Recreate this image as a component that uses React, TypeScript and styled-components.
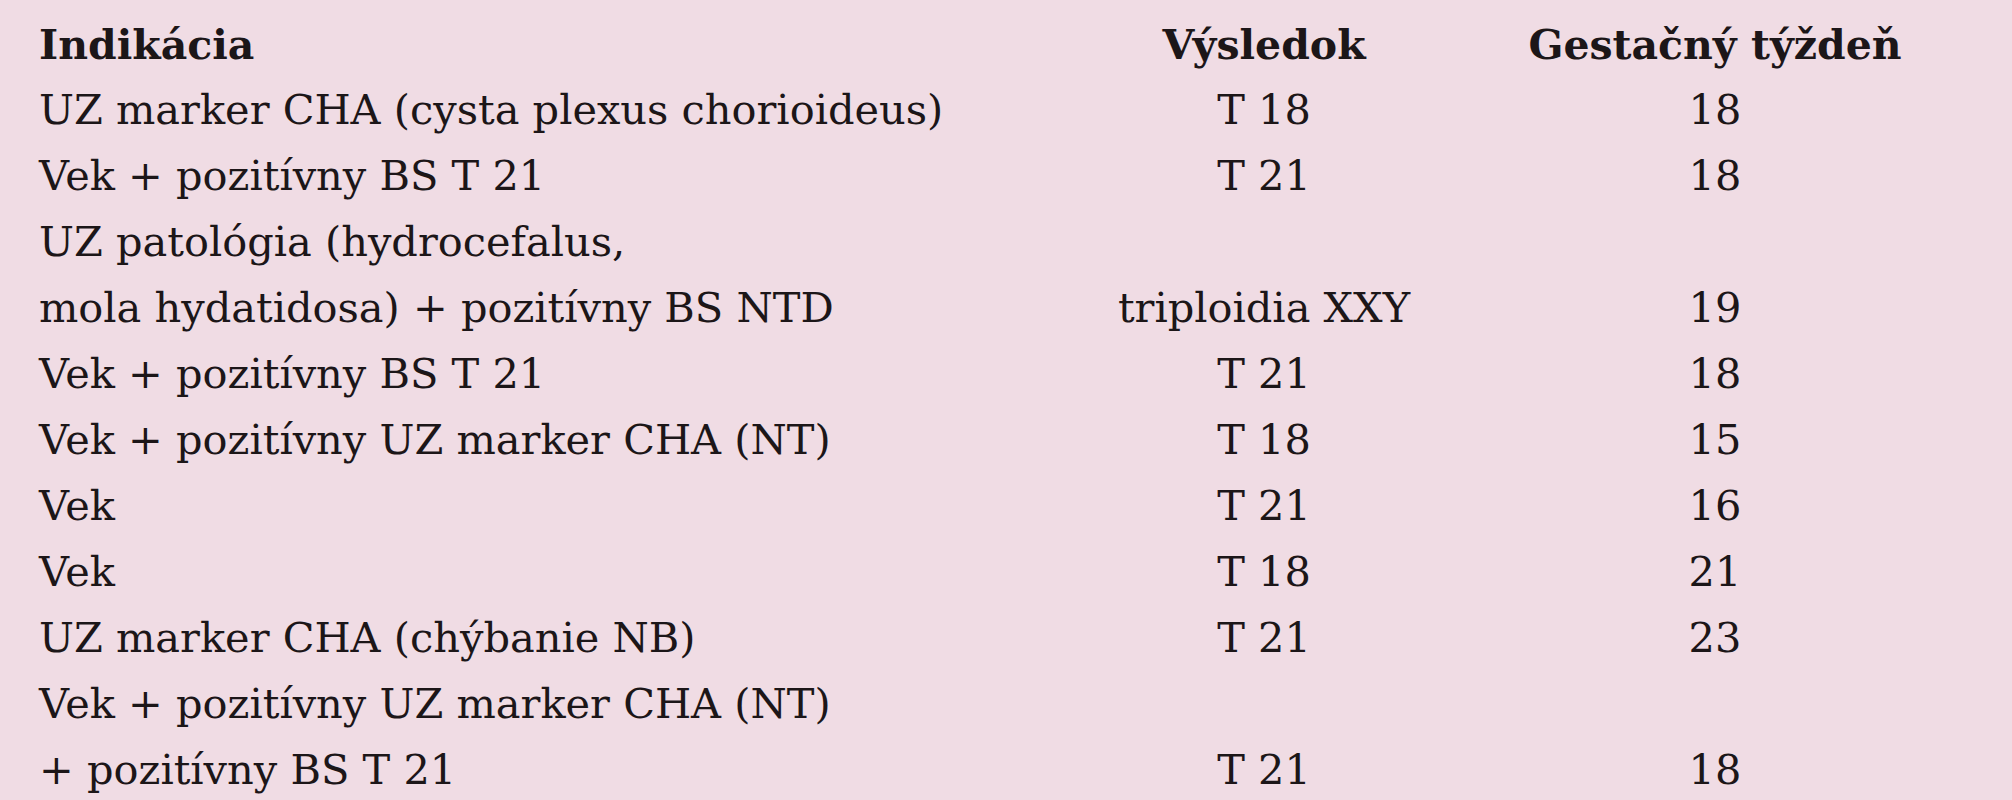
import React from 'react';
import styled, { createGlobalStyle } from 'styled-components';

const GlobalStyle = createGlobalStyle`
  html, body {
    margin: 0;
    padding: 0;
    background-color: #f0dce4;
  }
`;

type Row = {
  indication: string[];
  result: string;
  week: string;
};

const rows: Row[] = [
  { indication: ['UZ marker CHA (cysta plexus chorioideus)'], result: 'T 18', week: '18' },
  { indication: ['Vek + pozitívny BS T 21'], result: 'T 21', week: '18' },
  {
    indication: ['UZ patológia (hydrocefalus,', 'mola hydatidosa) + pozitívny BS NTD'],
    result: 'triploidia XXY',
    week: '19',
  },
  { indication: ['Vek + pozitívny BS T 21'], result: 'T 21', week: '18' },
  { indication: ['Vek + pozitívny UZ marker CHA (NT)'], result: 'T 18', week: '15' },
  { indication: ['Vek'], result: 'T 21', week: '16' },
  { indication: ['Vek'], result: 'T 18', week: '21' },
  { indication: ['UZ marker CHA (chýbanie NB)'], result: 'T 21', week: '23' },
  {
    indication: ['Vek + pozitívny UZ marker CHA (NT)', '+ pozitívny BS T 21'],
    result: 'T 21',
    week: '18',
  },
];

const App = () => {
  return (
    <Page>
      <GlobalStyle />
      <Table>
        <colgroup>
          <col style={{ width: 1060 }} />
          <col style={{ width: 330 }} />
          <col style={{ width: 572 }} />
        </colgroup>
        <thead>
          <tr>
            <Head>Indikácia</Head>
            <Head center>Výsledok</Head>
            <Head center>Gestačný týždeň</Head>
          </tr>
        </thead>
        <tbody>
          {rows.map((row, i) => (
            <tr key={i}>
              <Cell>
                {row.indication.map((line, j) => (
                  <Line key={j}>{line}</Line>
                ))}
              </Cell>
              <Cell center>{row.result}</Cell>
              <Cell center>{row.week}</Cell>
            </tr>
          ))}
        </tbody>
      </Table>
    </Page>
  );
};

const Page = styled.div`
  width: 2012px;
  height: 800px;
  box-sizing: border-box;
  padding: 11px 10px 0 39px;
  background-color: #f0dce4;
  overflow: hidden;
`;

const Table = styled.table`
  table-layout: fixed;
  border-collapse: collapse;
  border-spacing: 0;
  font-family: 'DejaVu Serif', 'Liberation Serif', serif;
  color: #1c1618;
`;

const Head = styled.th<{ center?: boolean }>`
  padding: 3px 0 0;
  font-size: 41px;
  font-weight: 700;
  line-height: 62.5px;
  text-align: ${({ center }) => (center ? 'center' : 'left')};
  vertical-align: bottom;
  white-space: nowrap;
`;

const Cell = styled.td<{ center?: boolean }>`
  padding: 0;
  font-size: 41.5px;
  font-weight: 400;
  line-height: 66px;
  text-align: ${({ center }) => (center ? 'center' : 'left')};
  vertical-align: bottom;
  white-space: nowrap;
`;

const Line = styled.div`
  display: block;
`;

export default App;
